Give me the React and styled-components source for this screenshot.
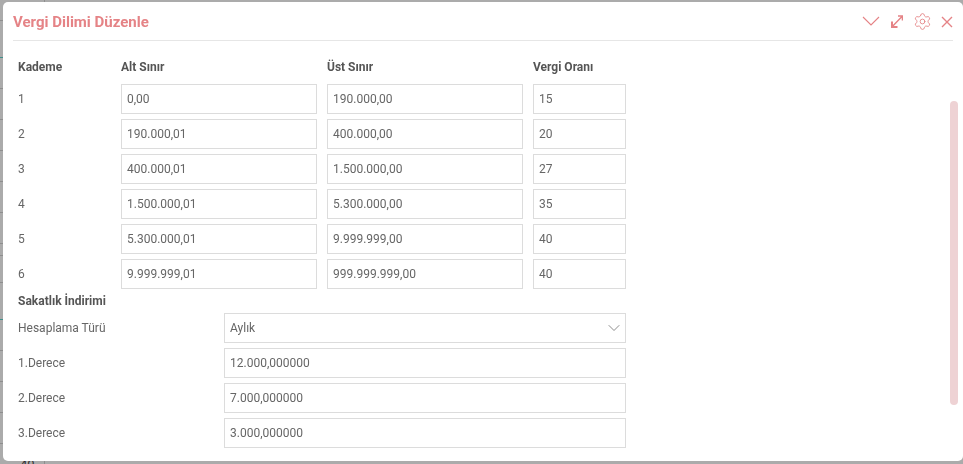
import React from "react";
import styled, { createGlobalStyle } from "styled-components";
import { Settings, ChevronDown } from "lucide-react";

const Global = createGlobalStyle`
  html, body { margin: 0; padding: 0; width: 963px; height: 464px; overflow: hidden; background: #ababab; }
  * { box-sizing: border-box; }
`;
const Page = styled.div`
  position: relative; width: 963px; height: 464px; overflow: hidden;
  background: #ababab; font-family: Roboto, "Liberation Sans", sans-serif;
`;
const BackLines = styled.div`display: block;`;
const BackLine = styled.div`
  height: ${p => p.$h}px;
  border-bottom: 1px solid ${p => (p.$teal ? "#3f8f8a" : "#8e8e8e")};
`;
const BackColumn = styled.div`
  position: absolute; left: 44px; top: 0; bottom: 0; width: 1px; background: #8e8e8e;
`;
const BackText = styled.div`
  position: absolute; left: 20px; top: 457px; font-size: 13px; font-weight: 400; color: #333;
`;
const Dialog = styled.section`
  position: absolute; left: 3px; top: 2px; width: 960px; height: 459px;
  background: #fff; border-radius: 5px; overflow: hidden; will-change: transform;
`;
const Header = styled.header`
  height: 39px; margin: 0 10px; display: flex; align-items: center; justify-content: space-between;
  border-bottom: 1px solid #e6e6e6;
`;
const Title = styled.h2`
  margin: 0; font-size: 15px; line-height: 38px; padding-top: 1px; font-weight: 700; color: #e58386;
`;
const Tools = styled.div`
  display: flex; align-items: center; color: #e58386; height: 38px;
`;
const Tool = styled.span`
  display: flex; width: ${p => p.$w}px; margin-left: ${p => p.$ml}px; padding-top: ${p => p.$pt || 0}px;
  justify-content: center; align-items: center;
`;
const Body = styled.div`
  padding: 19px 0 0 15px; width: 623px;
`;
const Grid = styled.div`
  display: grid; grid-template-columns: 93px 196px 196px 93px; column-gap: 10px; row-gap: 5px; align-items: center;
`;
const HeadCell = styled.div`
  font-size: 12px; line-height: 14px; font-weight: 700; color: #555; margin-bottom: 5px;
`;
const Label = styled.div`
  font-size: 12px; color: #666; line-height: 14px;
`;
const Field = styled.div`
  height: 30px; border: 1px solid #dcdcdc; padding: 0 5px; display: flex; align-items: center;
  justify-content: space-between; font-size: 12px; color: #666; background: #fff;
`;
const SelectCaret = styled(ChevronDown)`
  margin-right: -4px; color: #666;
`;
const Section = styled.div`
  font-size: 12px; line-height: 14px; font-weight: 700; color: #555; margin: 5px 0 0;
`;
const DiscountGrid = styled.div`
  display: grid; grid-template-columns: 196px 402px; column-gap: 10px; row-gap: 5px; align-items: center; margin-top: 5px;
`;
const Thumb = styled.div`
  position: absolute; left: 947px; top: 99px; width: 8px; height: 304px; border-radius: 4px; background: #eed2d4;
`;

const rows = [
  ["1", "0,00", "190.000,00", "15"],
  ["2", "190.000,01", "400.000,00", "20"],
  ["3", "400.000,01", "1.500.000,00", "27"],
  ["4", "1.500.000,01", "5.300.000,00", "35"],
  ["5", "5.300.000,01", "9.999.999,00", "40"],
  ["6", "9.999.999,01", "999.999.999,00", "40"],
];
const discounts = [["1.Derece", "12.000,000000"], ["2.Derece", "7.000,000000"], ["3.Derece", "3.000,000000"]];
const lines = [[21, 0], [37, 1], [31, 0], [31, 0], [31, 0], [31, 0], [31, 0], [31, 0], [12, 0], [27, 0], [37, 1], [31, 0], [31, 0], [31, 0], [31, 0]];

export default function App() {
  return (
    <Page>
      <Global />
      <BackLines>
        {lines.map(([h, t], i) => <BackLine key={i} $h={h} $teal={!!t} />)}
      </BackLines>
      <BackColumn />
      <BackText>40</BackText>
      <Dialog>
        <Header>
          <Title>Vergi Dilimi Düzenle</Title>
          <Tools>
            <Tool $w={18} $ml={0}>
              <svg width="18" height="10" viewBox="0 0 18 10" fill="none" stroke="currentColor" strokeWidth="1.1"><path d="M1 1l8 8 8-8" /></svg>
            </Tool>
            <Tool $w={12} $ml={11}>
              <svg width="12" height="13" viewBox="0 0 12 13" fill="none" stroke="currentColor" strokeWidth="1.4"><path d="M7 1h4.4v4.5M11.2 1.2L1.6 11.2" /><path d="M1 6.5v5.5h5.5" strokeWidth="2" /></svg>
            </Tool>
            <Tool $w={19} $ml={10}>
              <Settings size={19} strokeWidth={1.1} />
            </Tool>
            <Tool $w={12} $ml={9} $pt={2}>
              <svg width="12" height="12" viewBox="0 0 12 12" fill="none" stroke="currentColor" strokeWidth="1.4"><path d="M1 1l10 10M11 1L1 11" /></svg>
            </Tool>
          </Tools>
        </Header>
        <Body>
          <Grid>
            <HeadCell>Kademe</HeadCell>
            <HeadCell>Alt Sınır</HeadCell>
            <HeadCell>Üst Sınır</HeadCell>
            <HeadCell>Vergi Oranı</HeadCell>
            {rows.map(r => (
              <React.Fragment key={r[0]}>
                <Label>{r[0]}</Label>
                <Field>{r[1]}</Field>
                <Field>{r[2]}</Field>
                <Field>{r[3]}</Field>
              </React.Fragment>
            ))}
          </Grid>
          <Section>Sakatlık İndirimi</Section>
          <DiscountGrid>
            <Label>Hesaplama Türü</Label>
            <Field>Aylık<SelectCaret size={20} strokeWidth={0.9} /></Field>
            {discounts.map(d => (
              <React.Fragment key={d[0]}>
                <Label>{d[0]}</Label>
                <Field>{d[1]}</Field>
              </React.Fragment>
            ))}
          </DiscountGrid>
        </Body>
        <Thumb />
      </Dialog>
    </Page>
  );
}
